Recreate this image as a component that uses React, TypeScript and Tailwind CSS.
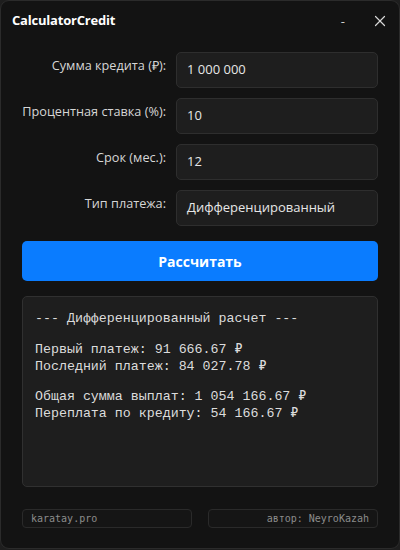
import { X } from 'lucide-react';

const fields = [
  { label: 'Сумма кредита (₽):', value: '1 000 000' },
  { label: 'Процентная ставка (%):', value: '10' },
  { label: 'Срок (мес.):', value: '12' },
  { label: 'Тип платежа:', value: 'Дифференцированный' },
];

// null = пустая строка между блоками
const lines: (string | null)[] = [
  '--- Дифференцированный расчет ---',
  null,
  'Первый платеж: 91 666.67 ₽',
  'Последний платеж: 84 027.78 ₽',
  null,
  'Общая сумма выплат: 1 054 166.67 ₽',
  'Переплата по кредиту: 54 166.67 ₽',
];

export default function App() {
  return (
    <div className="w-[400px] h-[550px] bg-[#1e1e1e] font-['Open_Sans',sans-serif]">
      <div className="h-[549px] rounded-[9px] border border-[#2b2b2b] bg-[#131313] flex flex-col">
        {/* Title bar */}
        <div className="flex items-center h-[40px] pl-[11px] pr-[10px]">
          <span className="text-white font-bold text-[13px] tracking-[-0.2px]">CalculatorCredit</span>
          <span className="ml-auto mr-[26px] text-[#cfcfcf] text-[13px] leading-none">-</span>
          <X className="w-[18px] h-[18px] text-[#d8d8d8]" strokeWidth={1.6} />
        </div>

        {/* Form */}
        <div className="flex flex-col gap-[10px] px-[21px] pt-[11px]">
          {fields.map((f) => (
            <div key={f.label} className="flex items-start gap-[10px]">
              <div className="flex-1 text-right whitespace-nowrap text-[12.7px] text-[#d6d6d6] pt-[4px]">{f.label}</div>
              <div className="w-[202px] h-[36px] rounded-[5px] border border-[#2e2e2e] bg-[#1e1e1e] flex items-center px-[10px] text-[13px] text-[#e6e6e6]">
                {f.value}
              </div>
            </div>
          ))}
          <button className="mt-[5px] h-[40px] rounded-[5px] bg-[#0a7cff] text-white font-bold text-[14px]">
            Рассчитать
          </button>
        </div>

        {/* Output */}
        <div className="mx-[21px] mt-[15px] h-[191px] rounded-[5px] border border-[#303030] bg-[#1e1e1e] px-[12px] pt-[13px] font-['Liberation_Mono',monospace] text-[13.3px] leading-[17px] text-[#dcdcdc]">
          {lines.map((l, i) =>
            l === null ? (
              <div key={i} className="h-[13.5px]" />
            ) : (
              <div key={i} className="whitespace-pre">{l}</div>
            )
          )}
        </div>

        {/* Footer */}
        <div className="flex gap-[16px] mx-[21px] mt-[22px]">
          <div className="flex-1 h-[19px] rounded-[4px] border border-[#2a2a2a] bg-[#151515] flex items-center px-[8px] font-['DejaVu_Sans_Mono',monospace] text-[10px] text-[#8c8c8c]">
            karatay.pro
          </div>
          <div className="flex-1 h-[19px] rounded-[4px] border border-[#2a2a2a] bg-[#151515] flex items-center justify-end px-[8px] font-['DejaVu_Sans_Mono',monospace] text-[10px] text-[#8c8c8c]">
            автор: NeyroKazah
          </div>
        </div>
      </div>
    </div>
  );
}
